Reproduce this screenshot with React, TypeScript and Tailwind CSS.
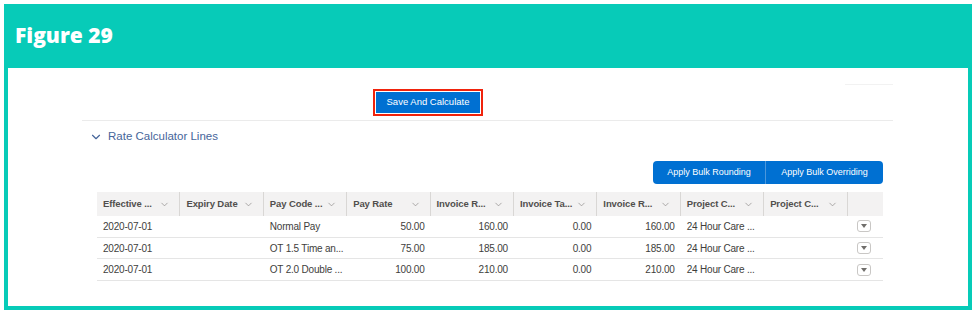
import { ChevronDown } from 'lucide-react';

const columns = [
  'Effective ...',
  'Expiry Date',
  'Pay Code ...',
  'Pay Rate',
  'Invoice R...',
  'Invoice Ta...',
  'Invoice R...',
  'Project C...',
  'Project C...',
];

type Row = {
  effective: string;
  expiry: string;
  payCode: string;
  payRate: string;
  invoiceRate: string;
  invoiceTax: string;
  invoiceTotal: string;
  project: string;
  projectCode: string;
};

const rows: Row[] = [
  { effective: '2020-07-01', expiry: '', payCode: 'Normal Pay', payRate: '50.00', invoiceRate: '160.00', invoiceTax: '0.00', invoiceTotal: '160.00', project: '24 Hour Care ...', projectCode: '' },
  { effective: '2020-07-01', expiry: '', payCode: 'OT 1.5 Time an...', payRate: '75.00', invoiceRate: '185.00', invoiceTax: '0.00', invoiceTotal: '185.00', project: '24 Hour Care ...', projectCode: '' },
  { effective: '2020-07-01', expiry: '', payCode: 'OT 2.0 Double ...', payRate: '100.00', invoiceRate: '210.00', invoiceTax: '0.00', invoiceTotal: '210.00', project: '24 Hour Care ...', projectCode: '' },
];

function HeaderCell({ label }: { label: string }) {
  return (
    <div className="flex h-full w-[83.4px] shrink-0 items-center justify-between border-r border-[#d9d7d5] pl-[6px] pr-[9px]">
      <span className="whitespace-nowrap text-[9.5px] font-bold tracking-[-0.1px] text-[#514f4d]">{label}</span>
      <ChevronDown className="h-[11px] w-[11px] shrink-0 text-[#8a8886]" strokeWidth={1.5} />
    </div>
  );
}

function Cell({ children, right = false }: { children?: React.ReactNode; right?: boolean }) {
  return (
    <div className={`flex w-[83.4px] shrink-0 items-center ${right ? 'justify-end px-[6px]' : 'pl-[6px] pr-[2px]'}`}>
      <span className="whitespace-nowrap tracking-[-0.2px]">{children}</span>
    </div>
  );
}

function RowMenu() {
  return (
    <div className="flex flex-1 items-center justify-center pr-[3px]">
      <div className="flex h-[12px] w-[14px] items-center justify-center rounded-[3px] border border-[#c9c7c5] bg-white">
        <svg width="6" height="4" viewBox="0 0 6 4" aria-hidden="true">
          <path d="M0 0h6L3 4z" fill="#706e6b" />
        </svg>
      </div>
    </div>
  );
}

export default function App() {
  return (
    <div className="h-[314px] w-[976px] bg-white p-[4px]" style={{ fontFamily: '"Liberation Sans", Arial, sans-serif' }}>
      <div className="flex h-[306px] flex-col border-4 border-[#07cbb8]">
        {/* Figure banner */}
        <div className="flex h-[60px] shrink-0 items-center bg-[#07cbb8] pb-[5px] pl-[7px]">
          <span className="text-[21px] font-extrabold text-white" style={{ fontFamily: '"Open Sans", sans-serif' }}>
            Figure 29
          </span>
        </div>

        <div className="flex flex-1 flex-col bg-white pl-[74px] pr-[75px]">
          {/* faint shadow remnant */}
          <div className="mt-[16px] flex h-[1px] justify-end">
            <div className="h-[1px] w-[48px] bg-[#f2f2f2]" />
          </div>

          {/* Save row */}
          <div className="mt-[4px] flex h-[27px] pl-[291px]">
            <div className="border-[2px] border-[#f0230c] p-[1px]">
              <button className="flex h-[21px] w-[104px] items-center justify-center bg-[#0070d2] text-[9.5px] text-white">
                Save And Calculate
              </button>
            </div>
          </div>

          <div className="mt-[4px] h-[1px] bg-[#ebebeb]" />

          {/* Section heading */}
          <div className="mt-[10px] flex h-[12px] items-center gap-[5px] pl-[7px] text-[#46659a]">
            <ChevronDown className="h-[14px] w-[14px]" strokeWidth={2} />
            <span className="text-[11.5px]">Rate Calculator Lines</span>
          </div>

          {/* Bulk actions */}
          <div className="mt-[18px] flex justify-end pr-[10px]">
            <div className="flex h-[23px] overflow-hidden rounded-[4px] text-[9px] text-white">
              <button className="flex w-[113px] items-center justify-center border-r border-[#4c97dc] bg-[#0070d2]">
                Apply Bulk Rounding
              </button>
              <button className="flex w-[117px] items-center justify-center bg-[#0070d2]">
                Apply Bulk Overriding
              </button>
            </div>
          </div>

          {/* Lines table */}
          <div className="mt-[8px] ml-[15px] mr-[10px] text-[10px] text-[#3e3e3c]">
            <div className="flex h-[24px] bg-[#f3f2f2]">
              {columns.map((c, i) => (
                <HeaderCell key={i} label={c} />
              ))}
              <div className="flex-1" />
            </div>
            {rows.map((r, i) => (
              <div key={i} className="flex h-[21.7px] border-b border-[#e5e5e5]">
                <Cell>{r.effective}</Cell>
                <Cell>{r.expiry}</Cell>
                <Cell>{r.payCode}</Cell>
                <Cell right>{r.payRate}</Cell>
                <Cell right>{r.invoiceRate}</Cell>
                <Cell right>{r.invoiceTax}</Cell>
                <Cell right>{r.invoiceTotal}</Cell>
                <Cell>{r.project}</Cell>
                <Cell>{r.projectCode}</Cell>
                <RowMenu />
              </div>
            ))}
          </div>
        </div>
      </div>
    </div>
  );
}
